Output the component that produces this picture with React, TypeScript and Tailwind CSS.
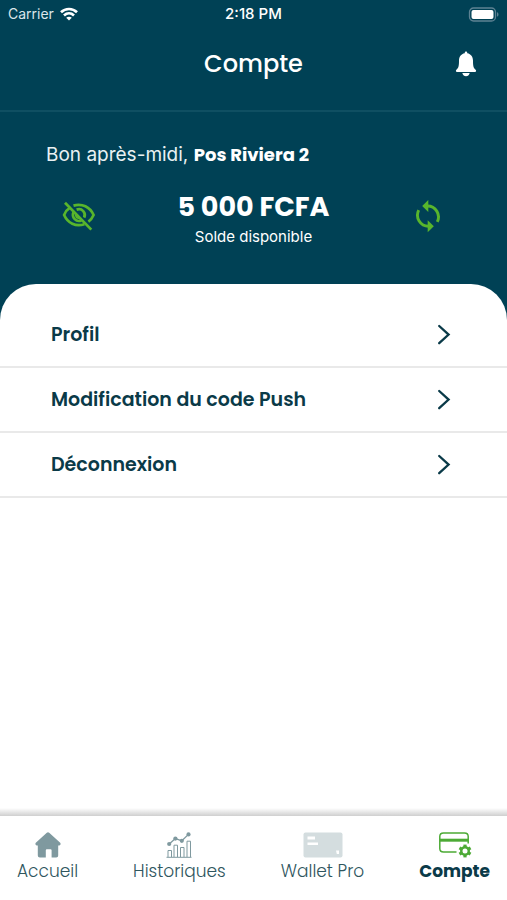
import type { ReactNode } from "react";

function WifiIcon() {
  return (
    <svg width="18" height="14" viewBox="0 0 18 14" fill="none" stroke="#fff" strokeWidth="2.7" aria-hidden="true">
      <path d="M1 5.2 C5.5 0.9 12.5 0.9 17 5.2" />
      <path d="M4 8.4 C7 5.6 11 5.6 14 8.4" />
      <path d="M9 13.6 L6.2 10.8 C7.8 9.3 10.2 9.3 11.8 10.8 Z" fill="#fff" stroke="none" />
    </svg>
  );
}

function BatteryIcon() {
  return (
    <svg width="31" height="15" viewBox="0 0 31 15" aria-hidden="true">
      <rect x="1.5" y="1" width="26" height="13" rx="4" fill="none" stroke="#5d8293" strokeWidth="1.3" />
      <rect x="3.5" y="3" width="22" height="9" rx="2" fill="#fff" />
      <path d="M29 5.3 C31 6 31 9 29 9.7 Z" fill="#5d8293" />
    </svg>
  );
}

function BellIcon() {
  return (
    <svg width="22" height="26" viewBox="0 0 22 26" fill="#fff" aria-hidden="true">
      <path d="M11 0.5 C11.9 0.5 12.3 1.2 12.3 2.2 C16 2.9 18 5.8 18 9.5 C18 15 18.4 16.8 20.6 18.8 C21.6 20 21 21 20 21 H2 C1 21 0.4 20 1.4 18.8 C3.6 16.8 4 15 4 9.5 C4 5.8 6 2.9 9.7 2.2 C9.7 1.2 10.1 0.5 11 0.5 Z" />
      <path d="M7.3 22 H14.7 C14 24.2 12.8 25.2 11 25.2 C9.2 25.2 8 24.2 7.3 22 Z" />
    </svg>
  );
}

function EyeOffIcon() {
  return (
    <svg width="34" height="30" viewBox="0 0 34 30" fill="none" stroke="#58b52c" strokeWidth="2.7" aria-hidden="true">
      <path d="M3 1.8 L29.3 28.6" />
      <path d="M11.5 4.6 C20 2 28 6 31.6 14 C30.4 16.8 28.8 19 26.4 20.6" />
      <path d="M7.4 7.2 C4.8 8.8 3.2 11 2.1 14 C5.8 22.2 13.6 26.2 22.4 23.2" />
      <path d="M14.6 8.6 C20 6.8 24.4 11.6 22.2 16.6" />
      <path d="M11.4 11.3 C9.4 16.6 14.2 21.6 19.4 19.4" />
      <path d="M13.8 13.4 C13.5 16 15 17.4 17.4 17.2" strokeWidth="1.8" />
    </svg>
  );
}

function RefreshIcon() {
  return (
    <svg width="26" height="34" viewBox="0 0 26 34" fill="none" stroke="#58b52c" strokeWidth="2.9" aria-hidden="true">
      <path d="M12.5 7 C20.5 7 26 15.4 22.3 22.9" />
      <path d="M13.5 27.2 C5.3 27.2 0 18.7 3.7 11.2" />
      <path d="M13.3 1 V13 L7.2 7 Z" fill="#58b52c" stroke="none" />
      <path d="M12.7 21.2 V33.2 L18.8 27.2 Z" fill="#58b52c" stroke="none" />
    </svg>
  );
}

function ChevronIcon() {
  return (
    <svg width="14" height="22" viewBox="0 0 14 22" fill="none" stroke="#0a3a48" strokeWidth="2.3" strokeLinecap="round" aria-hidden="true">
      <path d="M2.2 2 L11.6 10.6 L2.2 19.2" />
    </svg>
  );
}

function HomeIcon() {
  return (
    <svg width="26" height="26" viewBox="0 0 26 26" fill="#7f999f" aria-hidden="true">
      <path d="M11.8 0.8 Q13 -0.2 14.2 0.8 L25.2 10.8 Q26.4 12.6 24.4 13.4 H23.2 V23.6 Q23.2 25.6 21.2 25.6 H16.6 V18.2 Q16.6 17.2 15.6 17.2 H11.8 Q10.8 17.2 10.8 18.2 V25.6 H4.8 Q2.8 25.6 2.8 23.6 V13.4 H1.6 Q-0.4 12.6 0.8 10.8 Z" />
    </svg>
  );
}

function ChartIcon() {
  return (
    <svg width="26" height="26" viewBox="0 0 26 26" fill="none" stroke="#7f999f" strokeWidth="1" aria-hidden="true">
      <path d="M0.5 25.3 H25.5 M2 25 V18.5 H5.5 V25 M8 25 V13.2 H11.5 V25 M14.5 25 V15.5 H18 V25 M21 25 V9.2 H24.5 V25" />
      <path d="M3.2 12 L9.4 6.6 L15.8 8.8 L22.5 2.4" strokeWidth="1.3" />
      <g fill="#7f999f" stroke="none">
        <circle cx="3.2" cy="12" r="2.1" />
        <circle cx="9.4" cy="6.6" r="2.1" />
        <circle cx="15.8" cy="8.8" r="2.1" />
        <circle cx="22.5" cy="2.4" r="2.1" />
      </g>
    </svg>
  );
}

function WalletIcon() {
  return (
    <svg width="40" height="26" viewBox="0 0 40 26" aria-hidden="true">
      <rect x="0.5" y="0.5" width="39" height="25" rx="2" fill="#d4dddf" />
      <path d="M4.5 4.5 H12 V7.5 H4.5 Z M4.5 10.5 H15 V13 H4.5 Z M33 18.5 H36 V22 H33.8 Z" fill="#fff" />
    </svg>
  );
}

function AccountIcon() {
  return (
    <svg width="34" height="26" viewBox="0 0 34 26" fill="none" stroke="#4caa35" aria-hidden="true">
      <path d="M18.5 20 H5.5 Q1.8 20 1.8 16.5 V4.5 Q1.8 1 5.5 1 H26.5 Q30.2 1 30.2 4.5 V11.5" strokeWidth="1.5" />
      <path d="M1.8 8.2 H30.2" strokeWidth="3" />
      <g stroke="none" fill="#4caa35">
        <path d="M25.4 12.6 H28.6 V25.4 H25.4 Z" />
        <path d="M25.4 12.6 H28.6 V25.4 H25.4 Z" transform="rotate(60 27 19)" />
        <path d="M25.4 12.6 H28.6 V25.4 H25.4 Z" transform="rotate(120 27 19)" />
        <circle cx="27" cy="19" r="5" />
        <circle cx="27" cy="19" r="2.5" fill="#fff" />
      </g>
    </svg>
  );
}

const rows = ["Profil", "Modification du code Push", "Déconnexion"];

const tabs: { label: string; icon: ReactNode; active?: boolean }[] = [
  { label: "Accueil", icon: <HomeIcon /> },
  { label: "Historiques", icon: <ChartIcon /> },
  { label: "Wallet Pro", icon: <WalletIcon /> },
  { label: "Compte", icon: <AccountIcon />, active: true },
];

export default function App() {
  return (
    <div className="flex min-h-screen flex-col bg-[#004155] font-['Poppins','Inter',sans-serif]">
      <div className="grid h-7 grid-cols-3 items-center px-2 font-['Inter',sans-serif] text-sm text-white">
        <div className="flex items-center gap-1.5">
          <span className="text-[#dbe6ea]">Carrier</span>
          <WifiIcon />
        </div>
        <span className="text-center text-[15px] font-medium">2:18 PM</span>
        <div className="flex justify-end">
          <BatteryIcon />
        </div>
      </div>

      <header className="grid h-[84px] grid-cols-[1fr_auto_1fr] items-center border-b-2 border-[#0f4f62] px-[30px] pb-2.5">
        <h1 className="col-start-2 text-2xl font-medium text-white">Compte</h1>
        <button type="button" aria-label="Notifications" className="justify-self-end">
          <BellIcon />
        </button>
      </header>

      <section className="h-[172px] pt-[29px] text-white">
        <p className="px-[46px] text-lg leading-7">
          <span className="font-['Inter',sans-serif] text-[19px] text-[#eaf1f3]">Bon après-midi, </span>
          <strong className="font-bold">Pos Riviera 2</strong>
        </p>
        <div className="mt-5 flex items-center justify-between px-[62px]">
          <button type="button" aria-label="Masquer le solde" className="pb-1.5">
            <EyeOffIcon />
          </button>
          <div className="text-center">
            <p className="text-[27px] leading-9 font-bold">5 000 FCFA</p>
            <p className="font-['Inter',sans-serif] text-[15px] leading-6">Solde disponible</p>
          </div>
          <button type="button" aria-label="Actualiser le solde" className="px-1 pb-1.5">
            <RefreshIcon />
          </button>
        </div>
      </section>

      <main className="flex-1 rounded-t-[36px] bg-white pt-[19px]">
        <ul>
          {rows.map((row) => (
            <li key={row} className="border-b-2 border-[#e9e9e9]">
              <button type="button" className="flex h-[63px] w-full items-center justify-between pr-14 pl-[51px] text-left text-[19px] font-semibold text-[#0a3a48]">
                <span className="pt-0.5">{row}</span>
                <ChevronIcon />
              </button>
            </li>
          ))}
        </ul>
      </main>

      <nav className="bg-white">
        <div className="h-2 bg-linear-to-b from-white to-[#cfcfcf]" />
        <div className="flex h-[84px] justify-between px-[17px] pt-4">
          {tabs.map((tab) => (
            <a
              key={tab.label}
              href="#"
              aria-current={tab.active ? "page" : undefined}
              className={
                tab.active
                  ? "flex flex-col items-center text-[17px] leading-[26px] font-bold text-[#0a3a48]"
                  : "flex flex-col items-center text-[17px] leading-[26px] font-light text-[#2f565e]"
              }
            >
              {tab.icon}
              {tab.label}
            </a>
          ))}
        </div>
      </nav>
    </div>
  );
}
